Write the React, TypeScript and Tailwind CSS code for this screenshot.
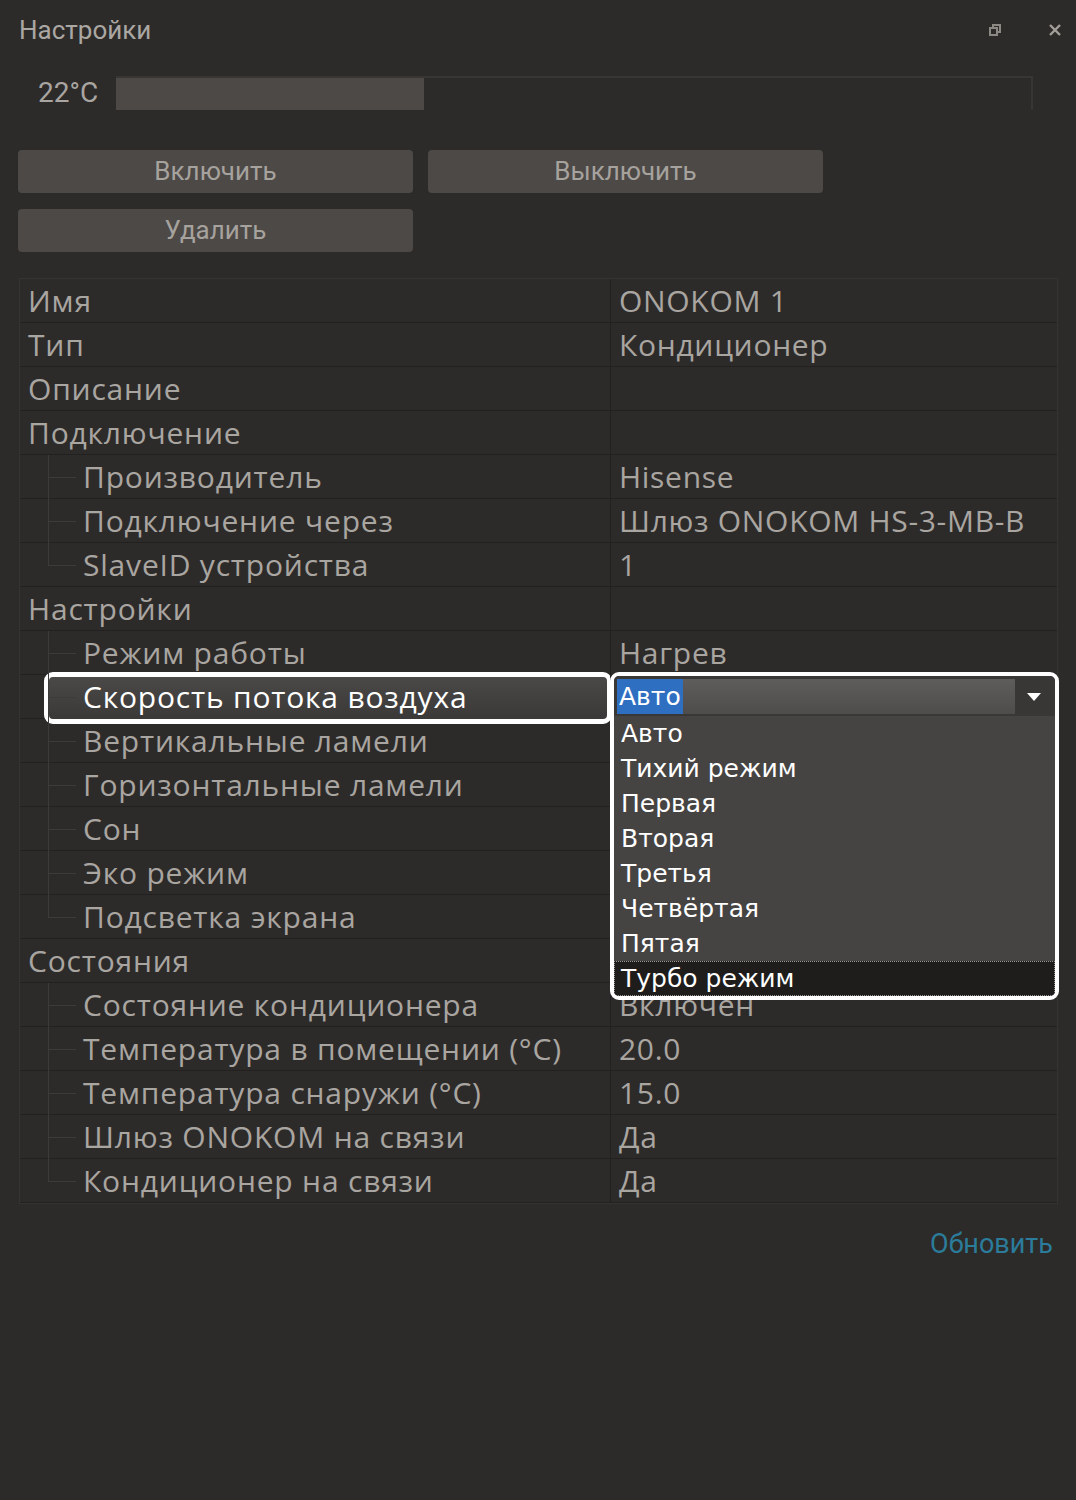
import React from 'react';

type Row = { label: string; value?: string; child?: boolean; last?: boolean };

const rows: Row[] = [
  { label: 'Имя', value: 'ONOKOM 1' },
  { label: 'Тип', value: 'Кондиционер' },
  { label: 'Описание' },
  { label: 'Подключение' },
  { label: 'Производитель', value: 'Hisense', child: true },
  { label: 'Подключение через', value: 'Шлюз ONOKOM HS-3-MB-B', child: true },
  { label: 'SlaveID устройства', value: '1', child: true, last: true },
  { label: 'Настройки' },
  { label: 'Режим работы', value: 'Нагрев', child: true },
  { label: 'Скорость потока воздуха', child: true },
  { label: 'Вертикальные ламели', child: true },
  { label: 'Горизонтальные ламели', child: true },
  { label: 'Сон', child: true },
  { label: 'Эко режим', child: true },
  { label: 'Подсветка экрана', child: true, last: true },
  { label: 'Состояния' },
  { label: 'Состояние кондиционера', value: 'Включен', child: true },
  { label: 'Температура в помещении (°C)', value: '20.0', child: true },
  { label: 'Температура снаружи (°C)', value: '15.0', child: true },
  { label: 'Шлюз ONOKOM на связи', value: 'Да', child: true },
  { label: 'Кондиционер на связи', value: 'Да', child: true, last: true },
];

const options = ['Авто', 'Тихий режим', 'Первая', 'Вторая', 'Третья', 'Четвёртая', 'Пятая'];

const TreeLine: React.FC<{ last?: boolean }> = ({ last }) => (
  <svg width="56" height="44" className="shrink-0" viewBox="0 0 56 44">
    <line x1="28.5" y1="0" x2="28.5" y2={last ? 22 : 44} stroke="#3d3b39" strokeWidth="1" />
    <line x1="28" y1="22.5" x2="56" y2="22.5" stroke="#3d3b39" strokeWidth="1" />
  </svg>
);

const App: React.FC = () => {
  return (
    <div className="w-[1076px] h-[1500px] bg-[#2d2b29] text-[#a9a5a1] font-['Open_Sans',sans-serif]">
      {/* Header */}
      <div className="h-[60px] flex items-center pl-[19px] pr-[14px]">
        <h1 className="text-[26px] font-['Roboto',sans-serif] text-[#aba7a3]">Настройки</h1>
        <div className="ml-auto flex items-center gap-[46px]">
          <svg width="14" height="14" viewBox="0 0 14 14" fill="none" stroke="#8c8884" strokeWidth="2">
            <rect x="5" y="2" width="7" height="7" />
            <rect x="2" y="5" width="7" height="7" fill="#2d2b29" />
          </svg>
          <svg width="14" height="14" viewBox="0 0 14 14" fill="none" stroke="#a29e9a" strokeWidth="2.4">
            <path d="M2 2l10 10M12 2L2 12" />
          </svg>
        </div>
      </div>

      {/* Slider */}
      <div className="flex items-center pl-[38px] mt-[16px] h-[34px]">
        <span className="text-[28px] font-['Roboto',sans-serif] w-[78px]">22°C</span>
        <div className="w-[917px] h-[34px] border-t-2 border-r-2 border-[#383634]">
          <div className="w-[308px] h-full bg-[#4d4946]" />
        </div>
      </div>

      {/* Buttons */}
      <div className="grid grid-cols-[395px_395px] gap-x-[15px] gap-y-[16px] pl-[18px] mt-[40px]">
        <button className="h-[43px] rounded-[4px] bg-[#4d4946] text-[#a6a29e] text-[26px] font-['Roboto',sans-serif]">Включить</button>
        <button className="h-[43px] rounded-[4px] bg-[#4d4946] text-[#a6a29e] text-[26px] font-['Roboto',sans-serif]">Выключить</button>
        <button className="h-[43px] rounded-[4px] bg-[#4d4946] text-[#a6a29e] text-[26px] font-['Roboto',sans-serif]">Удалить</button>
      </div>

      {/* Property grid */}
      <div className="relative ml-[19px] mt-[26px] w-[1039px] border border-[#363432]">
        {rows.map((r, i) => {
          const active = i === 9;
          return (
            <div key={i} className="grid grid-cols-[591px_446px] h-[44px] border-b border-[#222120] last:border-b-0">
              <div className="relative z-10 flex items-center border-r border-[#222120] text-[30px] leading-none tracking-[0.8px]">
                {r.child ? (
                  <>
                    <TreeLine last={r.last} />
                    <span className={`pl-[7px] whitespace-nowrap ${active ? 'text-white' : ''}`}>{r.label}</span>
                  </>
                ) : (
                  <span className="pl-[8px] whitespace-nowrap">{r.label}</span>
                )}
              </div>
              <div className="flex items-center pl-[8px] text-[30px] leading-none tracking-[0.7px] whitespace-nowrap">{r.value}</div>
            </div>
          );
        })}

        {/* Highlighted row outline */}
        <div className="absolute left-[24px] top-[393px] w-[568px] h-[52px] rounded-[9px] border-[5px] border-white bg-gradient-to-b from-[#4b4947] to-[#3b3938]" />

        {/* Open dropdown */}
        <div className="absolute z-20 left-[590px] top-[393px] w-[449px] h-[328px] rounded-[9px] border-[4px] border-white bg-[#464443] flex flex-col overflow-hidden font-['DejaVu_Sans',sans-serif] text-white">
          <div className="h-[40px] flex pt-[3px] pb-[2px] pl-[3px] pr-[3px] bg-[#3a3836]">
            <div className="flex-1 flex items-center bg-gradient-to-b from-[#5f5d5b] to-[#4f4d4b]">
              <span className="bg-[#2f6fc2] px-[2px] text-[25px] leading-[35px]">Авто</span>
            </div>
            <div className="w-[37px] flex items-center justify-center bg-[#393735]">
              <svg width="14" height="8" viewBox="0 0 14 8">
                <path d="M0 0h14L7 8z" fill="#ffffff" />
              </svg>
            </div>
          </div>
          <div className="flex flex-col">
            {options.map((o) => (
              <div key={o} className="h-[35px] flex items-center pl-[7px] text-[25px]">{o}</div>
            ))}
            <div className="h-[35px] flex items-center pl-[6px] text-[25px] bg-[#1e1d1c] border border-dotted border-[#9a9794]">Турбо режим</div>
          </div>
        </div>
      </div>

      {/* Footer link */}
      <div className="flex justify-end pr-[23px] mt-[20px]">
        <a className="text-[27px] font-['Roboto',sans-serif] text-[#2b7c9b]">Обновить</a>
      </div>
    </div>
  );
};

export default App;
